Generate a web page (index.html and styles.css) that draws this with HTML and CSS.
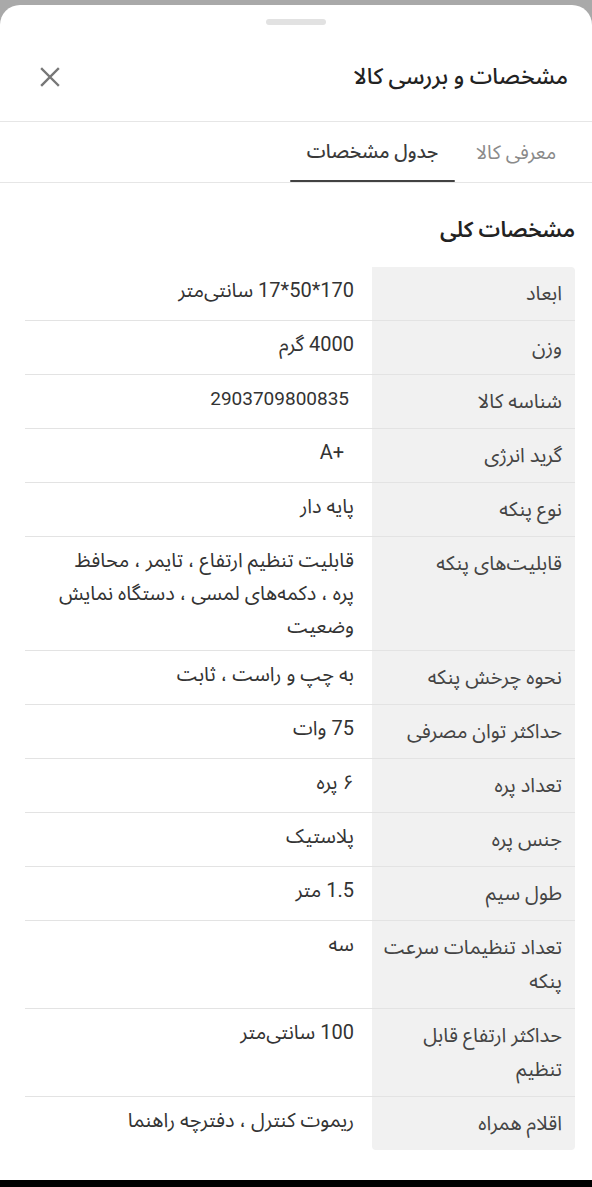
FILE: index.html
```html
<!DOCTYPE html>
<html lang="fa">
<head>
<meta charset="utf-8">
<title>مشخصات و بررسی کالا</title>
<link rel="stylesheet" href="styles.css">
</head>
<body>
<div class="screen">
  <div class="sheet" dir="rtl">
    <div class="handle"></div>
    <header class="header">
      <h1 class="title">مشخصات و بررسی کالا</h1>
      <button class="close" aria-label="بستن">
        <svg width="20" height="20" viewBox="0 0 20 20"><path d="M2 2L18 18M18 2L2 18" stroke="#777" stroke-width="2.4" stroke-linecap="square" fill="none"/></svg>
      </button>
    </header>
    <nav class="tabs">
      <div class="tab tab-intro">معرفی کالا</div>
      <div class="tab tab-specs active">جدول مشخصات</div>
    </nav>
    <section class="section">
      <h2 class="section-title">مشخصات کلی</h2>
      <div class="spec-table">
        <div class="row"><div class="label">ابعاد</div><div class="value">170*50*17 سانتی‌متر</div></div>
        <div class="row"><div class="label">وزن</div><div class="value">4000 گرم</div></div>
        <div class="row"><div class="label">شناسه کالا</div><div class="value">&nbsp;<span class="num">2903709800835</span></div></div>
        <div class="row"><div class="label">گرید انرژی</div><div class="value">&nbsp;&nbsp;<span dir="ltr">A+</span></div></div>
        <div class="row"><div class="label">نوع پنکه</div><div class="value">پایه دار</div></div>
        <div class="row"><div class="label">قابلیت‌های پنکه</div><div class="value">قابلیت تنظیم ارتفاع ، تایمر ، محافظ پره&nbsp;، دکمه‌های لمسی ، دستگاه نمایش وضعیت</div></div>
        <div class="row"><div class="label">نحوه چرخش پنکه</div><div class="value">به چپ و راست ، ثابت</div></div>
        <div class="row"><div class="label">حداکثر توان مصرفی</div><div class="value">75 وات</div></div>
        <div class="row"><div class="label">تعداد پره</div><div class="value">۶ پره</div></div>
        <div class="row"><div class="label">جنس پره</div><div class="value">پلاستیک</div></div>
        <div class="row"><div class="label">طول سیم</div><div class="value">1.5 متر</div></div>
        <div class="row"><div class="label">تعداد تنظیمات سرعت پنکه</div><div class="value">سه</div></div>
        <div class="row"><div class="label">حداکثر ارتفاع قابل تنظیم</div><div class="value">100 سانتی‌متر</div></div>
        <div class="row"><div class="label">اقلام همراه</div><div class="value">ریموت کنترل ، دفترچه راهنما</div></div>
      </div>
    </section>
  </div>
  <div class="navbar"></div>
</div>
</body>
</html>
```

FILE: styles.css
```css
* { box-sizing: border-box; }
html, body { margin: 0; padding: 0; }
body {
  background: #a9a9a9;
  font-family: Roboto, "Noto Sans Arabic", "DejaVu Sans", sans-serif;
  color: #333;
}
.screen {
  height: 1187px;
  display: flex;
  flex-direction: column;
  overflow: hidden;
}
.sheet {
  margin-top: 5px;
  flex: 1;
  background: #fff;
  border-radius: 20px 20px 0 0;
  overflow: hidden;
}
.navbar {
  height: 7px;
  background: #000;
}
.handle {
  width: 60px;
  height: 6px;
  border-radius: 3px;
  background: #e2e2e2;
  margin: 14px auto 0;
}
.header {
  height: 97px;
  display: flex;
  align-items: center;
  justify-content: space-between;
  padding: 8px 24px 0 40px;
  border-bottom: 1px solid #e6e6e6;
}
.title {
  margin: 0;
  font-size: 22.6px;
  font-weight: 500;
  color: #222;
}
.close {
  border: 0;
  background: none;
  padding: 0;
  width: 20px;
  height: 20px;
  display: flex;
}
.tabs {
  display: flex;
  padding-right: 15px;
  border-bottom: 1px solid #e6e6e6;
}
.tab {
  height: 60px;
  display: flex;
  align-items: center;
  justify-content: center;
  font-size: 19px;
  color: #8a8a8a;
  position: relative;
}
.tab-intro { width: 122px; font-size: 19.5px; }
.tab-specs { width: 165px; }
.tab.active {
  color: #3a3a3a;
  font-weight: 500;
}
.tab.active::after {
  content: "";
  position: absolute;
  left: 0;
  right: 0;
  bottom: 0;
  height: 2px;
  border-radius: 2px;
  background: #424242;
}
.section {
  padding: 32px 17px 0 25px;
}
.section-title {
  margin: 0 0 22px;
  font-size: 21.6px;
  line-height: 30px;
  font-weight: 600;
  color: #222;
}
.spec-table {
  display: flex;
  flex-direction: column;
}
.row {
  display: grid;
  grid-template-columns: 203px 1fr;
  border-bottom: 1px solid #e3e3e3;
}
.row:last-child { border-bottom: 0; }
.label {
  background: #f1f1f1;
  padding: 9px 13px 10px 10px;
  font-size: 20px;
  line-height: 34px;
  color: #444;
}
.row:first-child .label { border-top-right-radius: 4px; }
.row:last-child .label { border-bottom-right-radius: 4px; border-bottom-left-radius: 4px; }
.value {
  padding: 7px 18px 7px 24px;
  font-size: 20px;
  line-height: 33px;
  color: #333;
}
.num { font-size: 19px; }
```
